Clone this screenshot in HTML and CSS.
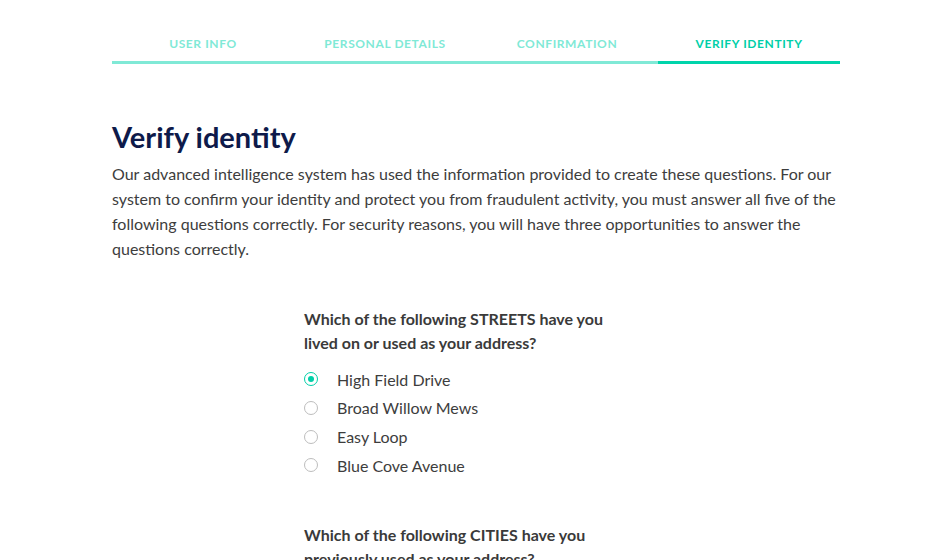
FILE: index.html
```html
<!DOCTYPE html>
<html>
  <head>
    <link rel="stylesheet" href="styles.css">
  </head>
  <body>
    <div class="page">
      <nav class="steps">
        <div class="step done">User info</div>
        <div class="step done">Personal details</div>
        <div class="step done">Confirmation</div>
        <div class="step active">Verify identity</div>
      </nav>

      <h1 class="title">Verify identity</h1>
      <p class="intro">Our advanced intelligence system has used the information provided to create these questions. For our system to confirm your identity and protect you from fraudulent activity, you must answer all five of the following questions correctly. For security reasons, you will have three opportunities to answer the questions correctly.</p>

      <div class="questions">
        <div class="question">
          <h2>Which of the following STREETS have you lived on or used as your address?</h2>
          <label class="option"><span class="radio checked"></span>High Field Drive</label>
          <label class="option"><span class="radio"></span>Broad Willow Mews</label>
          <label class="option"><span class="radio"></span>Easy Loop</label>
          <label class="option"><span class="radio"></span>Blue Cove Avenue</label>
        </div>

        <div class="question">
          <h2>Which of the following CITIES have you previously used as your address?</h2>
          <label class="option"><span class="radio"></span>Springfield</label>
          <label class="option"><span class="radio"></span>Riverton</label>
        </div>
      </div>
    </div>
  </body>
</html>
```

FILE: styles.css
```css
body {
  margin: 0;
  background: #fff;
  font-family: "Lato", "Open Sans", sans-serif;
  color: #3a3a3a;
}

.page {
  width: 728px;
  margin: 0 110px 0 112px;
  padding-top: 36px;
}

.steps {
  display: grid;
  grid-template-columns: repeat(4, 1fr);
}

.step {
  text-align: center;
  font-size: 12px;
  font-weight: 700;
  letter-spacing: 0.6px;
  text-transform: uppercase;
  padding-bottom: 10px;
  border-bottom: 3px solid #80e9d6;
  color: #80e9d6;
}

.step.active {
  color: #00cfa8;
  border-bottom-color: #00d4ab;
}

.title {
  margin: 55px 0 0;
  font-size: 29px;
  font-weight: 700;
  color: #0e1a4a;
  line-height: 36px;
}

.intro {
  margin: 6px 0 0;
  font-size: 16px;
  line-height: 25px;
  color: #3d3d3d;
}

.questions {
  width: 320px;
  margin: 46px 0 0 192px;
}

.question {
  margin-bottom: 43px;
}

.question h2 {
  margin: 0 0 10px;
  font-size: 16px;
  font-weight: 700;
  line-height: 24px;
  color: #3a3a3a;
}

.option {
  display: flex;
  align-items: center;
  height: 28.67px;
  font-size: 16px;
  color: #3d3d3d;
}

.radio {
  width: 12px;
  height: 12px;
  border: 1px solid #bdbdbd;
  border-radius: 50%;
  margin-right: 19px;
  position: relative;
}

.radio.checked {
  border-color: #00cfa8;
}

.radio.checked::after {
  content: "";
  position: absolute;
  left: 3px;
  top: 3px;
  width: 6px;
  height: 6px;
  border-radius: 50%;
  background: #00cfa8;
}
```
